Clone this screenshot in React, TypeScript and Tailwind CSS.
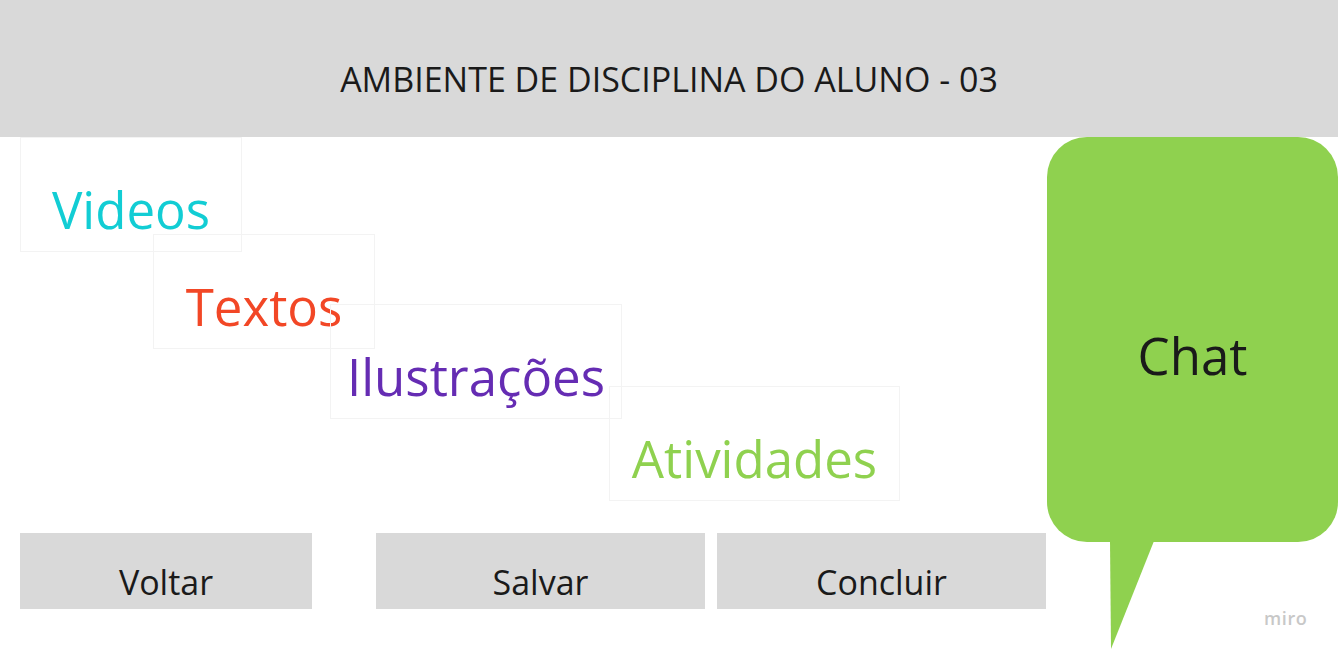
const font = { fontFamily: '"Open Sans", "Noto Sans", sans-serif' };

const cards = [
  { label: 'Videos', color: 'text-[#12cdd4]', box: 'ml-[20px] w-[222px]' },
  { label: 'Textos', color: 'text-[#f24726]', box: 'ml-[153px] w-[222px] -mt-[18px]' },
  { label: 'Ilustrações', color: 'text-[#652cb3]', box: 'ml-[330px] w-[292px] -mt-[45px]' },
  { label: 'Atividades', color: 'text-[#8fd14f]', box: 'ml-[609px] w-[291px] -mt-[33px]' },
];

const buttons = [
  { label: 'Voltar', cls: 'w-[292px]' },
  { label: 'Salvar', cls: 'w-[329px] ml-[64px]' },
  { label: 'Concluir', cls: 'w-[329px] ml-[12px]' },
];

export default function App() {
  return (
    <div
      className="relative w-[1338px] h-[656px] bg-white overflow-hidden text-[#1a1a1a]"
      style={font}
    >
      {/* Header */}
      <header className="h-[137px] bg-[#d9d9d9] flex justify-center pt-[62px]">
        <h1 className="text-[34px] leading-[34px]">
          AMBIENTE DE DISCIPLINA DO ALUNO - 03
        </h1>
      </header>

      <div className="flex">
        {/* Board */}
        <div className="w-[1047px] flex flex-col">
          {cards.map((c) => (
            <div
              key={c.label}
              className={`h-[115px] border border-[#f3f3f3] flex justify-center pt-[46px] ${c.box}`}
            >
              <span className={`text-[51px] leading-[50px] ${c.color}`}>
                {c.label}
              </span>
            </div>
          ))}

          <div className="flex mt-[32px] ml-[20px]">
            {buttons.map((b) => (
              <div
                key={b.label}
                className={`h-[76px] bg-[#d9d9d9] flex justify-center pt-[32px] ${b.cls}`}
              >
                <span className="text-[34px] leading-[34px]">{b.label}</span>
              </div>
            ))}
          </div>
        </div>

        {/* Chat bubble */}
        <div className="w-[291px] flex flex-col">
          <div className="h-[405px] bg-[#8fd14f] rounded-[40px] flex justify-center pt-[193px]">
            <span className="text-[51px] leading-[50px]">Chat</span>
          </div>
          <svg width="291" height="110" viewBox="0 0 291 110" className="-mt-[1px]">
            <polygon points="63,0 107,0 64,108" fill="#8fd14f" />
          </svg>
        </div>
      </div>

      <span className="absolute left-[1264px] top-[605px] text-[18px] font-semibold tracking-[0.6px] text-[#c8c8c8]">
        miro
      </span>
    </div>
  );
}
